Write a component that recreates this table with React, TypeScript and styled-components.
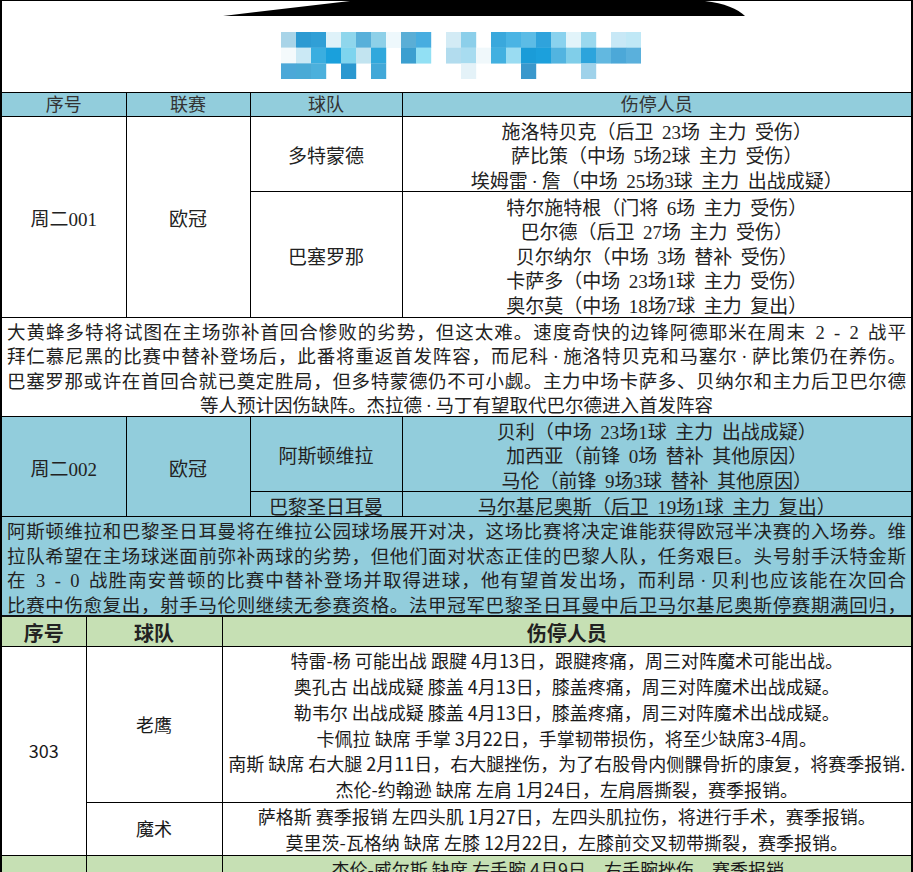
import React from 'react';
import styled, { createGlobalStyle } from 'styled-components';

const BLUE = '#92cddc';
const GREEN = '#c6e0b4';

const GlobalStyle = createGlobalStyle`
  html, body {
    margin: 0;
    padding: 0;
    background: #fff;
  }
  body {
    width: 913px;
    overflow: hidden;
  }
`;

// blurred logo, 3 rows x 24 columns of blue squares
const mosaic: string[][] = [
  ['#a8d4e8', '#2c9ad2', '#309fd6', '#dff2f9', '#8fd6ec', '#58b0da', '#8ed0e8', '#eef8fc', '#5aaed6', '#47ade0', '', '#d3ebf5',
    '#8ccfea', '', '#3aa8dc', '#4ab4e4', '#5cbce6', '#2fa3dc', '#8ad2ee', '#e2f4fa', '#9ad8ee', '', '#c8e8f6', '#c0e8f6'],
  ['#f4fafc', '#cbe9f5', '#3aaee0', '#1aa0dc', '#7ed4ee', '#c2e4f0', '#30a8dc', '', '#3b9fd0', '#92e0f4', '', '#b2dcee',
    '#a8dcf0', '#f0f8fb', '#42b0e0', '#9adcf2', '#1a9cd8', '#1ca0dc', '#52b4e0', '#80cee9', '#2ca4dc', '#62b8e0', '#4ca8d8', '#5ab0dc'],
  ['#4ca8d8', '#4aaad6', '#4cb0dc', '', '#2a98d0', '', '#42a8d8', '', '', '', '', '',
    '#e4f2f8', '', '', '', '#3a98cc', '', '', '', '#9fd2ea', '', '', ''],
];

const uclRows = [
  {
    no: '周二001',
    league: '欧冠',
    bg: '#fff',
    teams: [
      {
        name: '多特蒙德',
        h: 74,
        players: [
          '施洛特贝克（后卫 23场 主力 受伤）',
          '萨比策（中场 5场2球 主力 受伤）',
          '埃姆雷·詹（中场 25场3球 主力 出战成疑）',
        ],
      },
      {
        name: '巴塞罗那',
        h: 125,
        players: [
          '特尔施特根（门将 6场 主力 受伤）',
          '巴尔德（后卫 27场 主力 受伤）',
          '贝尔纳尔（中场 3场 替补 受伤）',
          '卡萨多（中场 23场1球 主力 受伤）',
          '奥尔莫（中场 18场7球 主力 复出）',
        ],
      },
    ],
    note: [
      '大黄蜂多特将试图在主场弥补首回合惨败的劣势，但这太难。速度奇快的边锋阿德耶米在周末 2 - 2 战平',
      '拜仁慕尼黑的比赛中替补登场后，此番将重返首发阵容，而尼科·施洛特贝克和马塞尔·萨比策仍在养伤。',
      '巴塞罗那或许在首回合就已奠定胜局，但多特蒙德仍不可小觑。主力中场卡萨多、贝纳尔和主力后卫巴尔德',
      '等人预计因伤缺阵。杰拉德·马丁有望取代巴尔德进入首发阵容',
    ],
    centerLast: true,
  },
  {
    no: '周二002',
    league: '欧冠',
    bg: BLUE,
    teams: [
      {
        name: '阿斯顿维拉',
        h: 74,
        players: [
          '贝利（中场 23场1球 主力 出战成疑）',
          '加西亚（前锋 0场 替补 其他原因）',
          '马伦（前锋 9场3球 替补 其他原因）',
        ],
      },
      {
        name: '巴黎圣日耳曼',
        h: 24,
        players: ['马尔基尼奥斯（后卫 19场1球 主力 复出）'],
      },
    ],
    note: [
      '阿斯顿维拉和巴黎圣日耳曼将在维拉公园球场展开对决，这场比赛将决定谁能获得欧冠半决赛的入场券。维',
      '拉队希望在主场球迷面前弥补两球的劣势，但他们面对状态正佳的巴黎人队，任务艰巨。头号射手沃特金斯',
      '在 3 - 0 战胜南安普顿的比赛中替补登场并取得进球，他有望首发出场，而利昂·贝利也应该能在次回合',
      '比赛中伤愈复出，射手马伦则继续无参赛资格。法甲冠军巴黎圣日耳曼中后卫马尔基尼奥斯停赛期满回归，',
    ],
    centerLast: false,
  },
];

const nbaTeams = [
  {
    name: '老鹰',
    h: 155,
    players: [
      '特雷-杨 可能出战 跟腱 4月13日，跟腱疼痛，周三对阵魔术可能出战。',
      '奥孔古 出战成疑 膝盖 4月13日，膝盖疼痛，周三对阵魔术出战成疑。',
      '勒韦尔 出战成疑 膝盖 4月13日，膝盖疼痛，周三对阵魔术出战成疑。',
      '卡佩拉 缺席 手掌 3月22日，手掌韧带损伤，将至少缺席3-4周。',
      '南斯 缺席 右大腿 2月11日，右大腿挫伤，为了右股骨内侧髁骨折的康复，将赛季报销.',
      '杰伦-约翰逊 缺席 左肩 1月24日，左肩唇撕裂，赛季报销。',
    ],
  },
  {
    name: '魔术',
    h: 52,
    players: [
      '萨格斯 赛季报销 左四头肌 1月27日，左四头肌拉伤，将进行手术，赛季报销。',
      '莫里茨-瓦格纳 缺席 左膝 12月22日，左膝前交叉韧带撕裂，赛季报销。',
    ],
  },
];

// the middle dot is drawn wide in the sheet, give it some room
const withDots = (s: string) =>
  s.split('·').flatMap((part, i) => (i === 0 ? [part] : [<Dot key={i}>·</Dot>, part]));

export default function App() {
  return (
    <>
      <GlobalStyle />
      <Sheet>
        <TitleArea>
          <Ribbon width="909" height="16" viewBox="2 0 909 16">
            <path d="M223 15 L350 0 L705 0 C724 2 738 8 745 15 Z" fill="#000" />
          </Ribbon>
          <Mosaic width="360" height="47" viewBox="0 0 360 47">
            {mosaic.map((row, r) =>
              row.map((c, i) =>
                c ? <rect key={`${r}-${i}`} x={i * 15} y={r * 15.67} width="15.2" height="15.9" fill={c} /> : null
              )
            )}
          </Mosaic>
        </TitleArea>

        <Grid>
          <colgroup>
            <Col $w={124} />
            <Col $w={124} />
            <Col $w={152} />
            <col />
          </colgroup>
          <tbody>
            <tr>
              <HeadCell>序号</HeadCell>
              <HeadCell>联赛</HeadCell>
              <HeadCell>球队</HeadCell>
              <HeadCell>伤停人员</HeadCell>
            </tr>
            {uclRows.map((m) => (
              <React.Fragment key={m.no}>
                {m.teams.map((t, ti) => (
                  <tr key={t.name}>
                    {ti === 0 && (
                      <>
                        <Cell rowSpan={m.teams.length} $bg={m.bg}>
                          <Line>{m.no}</Line>
                        </Cell>
                        <Cell rowSpan={m.teams.length} $bg={m.bg}>
                          <Line>{m.league}</Line>
                        </Cell>
                      </>
                    )}
                    <Cell $bg={m.bg} $h={t.h}>
                      <Line>{t.name}</Line>
                    </Cell>
                    <Cell $bg={m.bg} $h={t.h}>
                      {t.players.map((p) => (
                        <Line key={p}>{withDots(p)}</Line>
                      ))}
                    </Cell>
                  </tr>
                ))}
                <tr>
                  <NoteCell colSpan={4} $bg={m.bg}>
                    {m.note.map((l, li) => (
                      <NoteLine key={l} $center={m.centerLast && li === m.note.length - 1}>
                        {withDots(l)}
                      </NoteLine>
                    ))}
                  </NoteCell>
                </tr>
              </React.Fragment>
            ))}
          </tbody>
        </Grid>

        <NbaBlock>
          <NbaGrid>
            <colgroup>
              <Col $w={84} />
              <Col $w={136} />
              <col />
            </colgroup>
            <tbody>
              <tr>
                <GreenHead>序号</GreenHead>
                <GreenHead>球队</GreenHead>
                <GreenHead>伤停人员</GreenHead>
              </tr>
              {nbaTeams.map((t, ti) => (
                <tr key={t.name}>
                  {ti === 0 && <NbaCell rowSpan={nbaTeams.length}>303</NbaCell>}
                  <NbaCell $h={t.h}>{t.name}</NbaCell>
                  <NbaCell $h={t.h}>
                    {t.players.map((p) => (
                      <NbaLine key={p}>{p}</NbaLine>
                    ))}
                  </NbaCell>
                </tr>
              ))}
              <tr>
                <NbaCell $bg={GREEN} $h={26} />
                <NbaCell $bg={GREEN} $h={26} />
                <NbaCell $bg={GREEN} $h={26}>
                  <NbaLine>杰伦-威尔斯 缺席 右手腕 4月9日，右手腕挫伤，赛季报销。</NbaLine>
                </NbaCell>
              </tr>
            </tbody>
          </NbaGrid>
        </NbaBlock>
      </Sheet>
    </>
  );
}

const Sheet = styled.div`
  width: 913px;
  box-sizing: border-box;
  border-top: 1px solid #000;
  border-left: 2px solid #000;
  border-right: 2px solid #000;
  background: #fff;
`;

const TitleArea = styled.div`
  height: 92px;
  box-sizing: border-box;
  display: flex;
  flex-direction: column;
  align-items: flex-start;
  border-bottom: 1px solid #000;
`;

const Ribbon = styled.svg`
  display: block;
`;

const Mosaic = styled.svg`
  display: block;
  margin: 15px 0 0 279px;
`;

const Grid = styled.table`
  width: 100%;
  border-collapse: collapse;
  border-style: hidden;
  table-layout: fixed;
  font-family: "Liberation Serif", "Noto Sans CJK SC", serif;
  color: #222;
`;

const Col = styled.col<{ $w: number }>`
  width: ${(p) => p.$w}px;
`;

const HeadCell = styled.th`
  height: 23px;
  box-sizing: border-box;
  padding: 3px 0 0;
  border: 1px solid #000;
  background: ${BLUE};
  color: #333;
  font-size: 18px;
  font-weight: normal;
  line-height: 19px;
  text-align: center;
`;

const Cell = styled.td<{ $bg?: string; $h?: number }>`
  ${(p) => (p.$h ? `height: ${p.$h}px;` : '')}
  padding: 0;
  border: 1px solid #000;
  background: ${(p) => p.$bg ?? '#fff'};
  font-size: 19px;
  line-height: 21px;
  word-spacing: 0.2em;
  text-align: center;
  vertical-align: middle;
`;

const NoteCell = styled(Cell)`
  height: 98px;
  padding: 0 5px;
  font-size: 18.5px;
  word-spacing: 0.2em;
`;

// text sits a little low in each 24.5px row, as in the sheet
const Line = styled.div`
  height: 24.5px;
  box-sizing: border-box;
  padding-top: 5px;
  white-space: nowrap;
`;

const NoteLine = styled.div<{ $center: boolean }>`
  height: 24.5px;
  box-sizing: border-box;
  padding-top: 5px;
  text-align: ${(p) => (p.$center ? 'center' : 'justify')};
  text-align-last: ${(p) => (p.$center ? 'center' : 'justify')};
`;

const Dot = styled.span`
  margin: 0 0.2em;
`;

const NbaBlock = styled.div`
  border-top: 2px solid #111;
`;

const NbaGrid = styled(Grid)`
  font-family: "Noto Sans CJK SC", sans-serif;
  color: #1a1a1a;
`;

const GreenHead = styled.th`
  height: 29px;
  box-sizing: border-box;
  padding: 2px 0 0;
  border: 1px solid #000;
  background: ${GREEN};
  color: #222;
  font-size: 20px;
  font-weight: bold;
  line-height: 25px;
  text-align: center;
`;

const NbaCell = styled.td<{ $bg?: string; $h?: number }>`
  ${(p) => (p.$h ? `height: ${p.$h}px;` : '')}
  padding: 0;
  border: 1px solid #000;
  background: ${(p) => p.$bg ?? '#fff'};
  font-size: 18px;
  line-height: 23px;
  text-align: center;
  vertical-align: middle;
`;

const NbaLine = styled.div`
  height: 25.8px;
  box-sizing: border-box;
  padding-top: 2.5px;
  white-space: nowrap;
`;
